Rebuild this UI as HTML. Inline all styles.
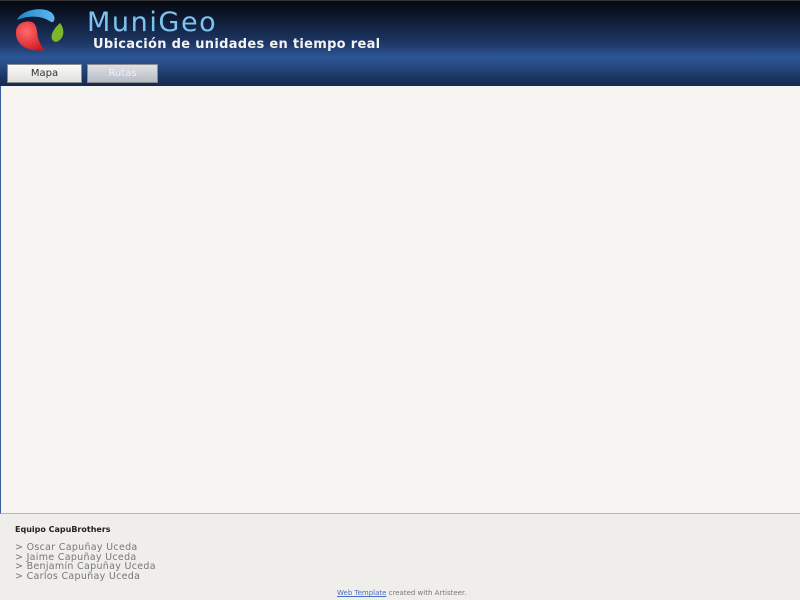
<!DOCTYPE html>
<html><head><meta charset="utf-8"><style>
*{margin:0;padding:0;box-sizing:border-box}
body{width:800px;height:600px;overflow:hidden;background:#efeeea;font-family:"DejaVu Sans","Liberation Sans",sans-serif;position:relative}
#hdr{position:absolute;left:0;top:0;width:800px;height:86px;background:linear-gradient(#05080f 0px,#101d38 20px,#1d3766 42px,#2c5596 56px,#2a4f8a 62px,#1d3866 75px,#15284c 86px);border-top:1px solid #333}
#title{position:absolute;left:87px;top:6px;font-size:27px;color:#7cc4ef;letter-spacing:1.6px}
#sub{position:absolute;left:93px;top:36px;font-size:13px;font-weight:bold;color:#f4f4f4;letter-spacing:0.3px}
.btn{position:absolute;top:63px;height:19px;font-size:10px;text-align:center;line-height:18px;border:1px solid #8c8c8c}
#b1{left:7px;width:75px;background:linear-gradient(#fafafa,#e2e0da);color:#333}
#b2{left:87px;width:71px;background:linear-gradient(#dfe2e6,#b6bcc4);color:#eef}
#main{position:absolute;left:0;top:86px;width:800px;height:428px;background:#f6f5f1;border-left:1px solid #3b5fa3;border-bottom:1px solid #a6bbdc}
#ft{position:absolute;left:15px;top:525px;font-size:8px;font-weight:bold;color:#222}
#lst{position:absolute;left:15px;top:543px;font-size:9.5px;color:#777;line-height:9.5px;letter-spacing:0.3px}
#cr{position:absolute;left:337px;top:589px;font-size:7px;color:#777}
#cr a{color:#4a6fc0}
</style></head><body>
<div id="hdr">
<svg style="position:absolute;left:10px;top:5px" width="60" height="48" viewBox="0 0 60 48">
<defs><radialGradient id="r" cx="0.35" cy="0.35" r="0.8"><stop offset="0" stop-color="#ff6a6a"/><stop offset="1" stop-color="#d0101a"/></radialGradient>
<linearGradient id="b" x1="0" y1="0" x2="1" y2="0"><stop offset="0" stop-color="#1e86cc"/><stop offset="1" stop-color="#5fb8ee"/></linearGradient></defs>
<path d="M7 14 C12 3 34 0 42 7 C46 11 45 17 41 16 C34 11 22 8 7 14 Z" fill="url(#b)"/>
<path d="M6 28 C5 18 14 14 22 16 C27 18 27 26 28 32 C30 38 32 42 36 44 C22 46 7 42 6 28 Z" fill="url(#r)"/>
<path d="M50 17 C55 23 55 33 46 36 C40 35 39 27 50 17 Z" fill="#7cb62a"/>
</svg>
<div id="title">MuniGeo</div>
<div id="sub">Ubicación de unidades en tiempo real</div>
<div class="btn" id="b1">Mapa</div>
<div class="btn" id="b2">Rutas</div>
</div>
<div id="main"></div>
<div id="ft">Equipo CapuBrothers</div>
<div id="lst">&gt; Oscar Capuñay Uceda<br>&gt; Jaime Capuñay Uceda<br>&gt; Benjamín Capuñay Uceda<br>&gt; Carlos Capuñay Uceda</div>
<div id="cr"><a><u>Web Template</u></a> created with Artisteer.</div>
</body></html>
